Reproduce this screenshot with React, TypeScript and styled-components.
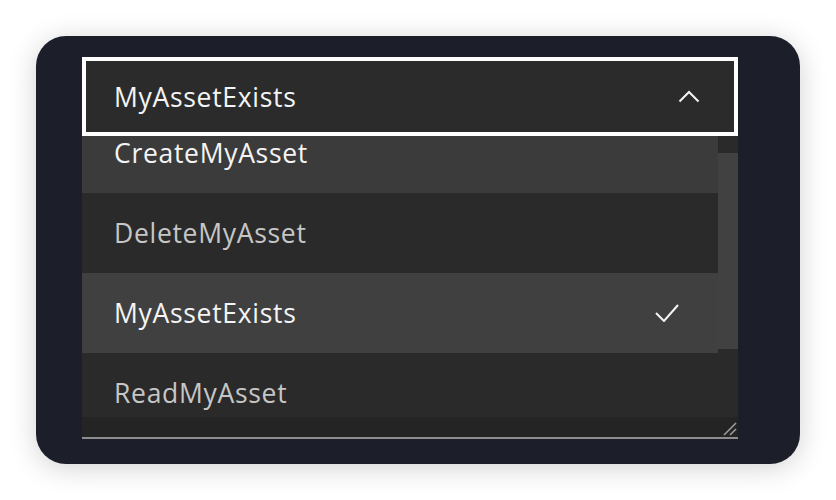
import React from "react";
import styled, { createGlobalStyle } from "styled-components";

const Global = createGlobalStyle`
  html, body { margin: 0; padding: 0; background: #ffffff; }
  body { font-family: "Open Sans", "Noto Sans", sans-serif; }
`;

const Page = styled.div`
  width: 836px;
  height: 500px;
  padding: 36px;
  box-sizing: border-box;
`;

const Card = styled.div`
  width: 764px;
  height: 428px;
  box-sizing: border-box;
  background: #1c1e2a;
  border-radius: 30px;
  box-shadow: 0 4px 28px rgba(0, 0, 0, 0.18);
  padding: 21px 62px 0 46px;
  display: flex;
  flex-direction: column;
`;

const Trigger = styled.div`
  height: 79px;
  box-sizing: border-box;
  border: 4px solid #ffffff;
  background: #2b2b2b;
  display: flex;
  align-items: center;
  justify-content: space-between;
  padding: 0 34px 0 28px;
  position: relative;
  z-index: 1;
`;

const Label = styled.span<{ $muted?: boolean }>`
  font-family: "Open Sans", "Noto Sans", sans-serif;
  font-size: 26.5px;
  letter-spacing: 0.7px;
  color: ${(p) => (p.$muted ? "#c6c6c6" : "#f4f4f4")};
`;

const Menu = styled.div`
  display: flex;
  flex-direction: column;
  background: #242424;
  border-bottom: 2px solid #8d8d8d;
`;

const ListArea = styled.div`
  height: 281px;
  display: flex;
  background: #2a2a2a;
`;

const Viewport = styled.div`
  flex: 1;
  overflow: hidden;
`;

const Options = styled.div`
  margin-top: -23px;
  display: flex;
  flex-direction: column;
`;

const Option = styled.div<{ $bg: string }>`
  height: 80px;
  flex: none;
  background: ${(p) => p.$bg};
  display: flex;
  align-items: center;
  justify-content: space-between;
  padding: 0 39px 0 32px;
  box-sizing: border-box;
`;

const Scrollbar = styled.div`
  width: 20px;
  flex: none;
  background: #2a2a2a;
  display: flex;
  flex-direction: column;
`;

const Thumb = styled.div`
  margin-top: 17px;
  height: 196px;
  background: #414141;
`;

const Footer = styled.div`
  height: 20px;
  display: flex;
  justify-content: flex-end;
  align-items: flex-end;
  background: #242424;
`;

const Grip = styled.svg`
  display: block;
  margin: 0 1px 1px 0;
`;

const Chevron = () => (
  <svg width="22" height="13" viewBox="0 0 22 13">
    <polyline points="1.5,11.5 11,2 20.5,11.5" fill="none" stroke="#f4f4f4" strokeWidth="2" />
  </svg>
);

const Check = () => (
  <svg width="24" height="18" viewBox="0 0 24 18">
    <polyline points="1,9 9,17 23,1" fill="none" stroke="#f4f4f4" strokeWidth="2" />
  </svg>
);

export default function App() {
  return (
    <>
      <Global />
      <Page>
        <Card>
          <Trigger>
            <Label>MyAssetExists</Label>
            <Chevron />
          </Trigger>
          <Menu>
            <ListArea>
              <Viewport>
                <Options>
                  <Option $bg="#3b3b3b">
                    <Label>CreateMyAsset</Label>
                  </Option>
                  <Option $bg="#2a2a2a">
                    <Label $muted>DeleteMyAsset</Label>
                  </Option>
                  <Option $bg="#404040">
                    <Label>MyAssetExists</Label>
                    <Check />
                  </Option>
                  <Option $bg="#2a2a2a">
                    <Label $muted>ReadMyAsset</Label>
                  </Option>
                </Options>
              </Viewport>
              <Scrollbar>
                <Thumb />
              </Scrollbar>
            </ListArea>
            <Footer>
              <Grip width="14" height="14" viewBox="0 0 14 14">
                <line x1="1" y1="13" x2="13" y2="1" stroke="#9a9a9a" strokeWidth="1.6" />
                <line x1="7" y1="13" x2="13" y2="7" stroke="#9a9a9a" strokeWidth="1.6" />
              </Grip>
            </Footer>
          </Menu>
        </Card>
      </Page>
    </>
  );
}
